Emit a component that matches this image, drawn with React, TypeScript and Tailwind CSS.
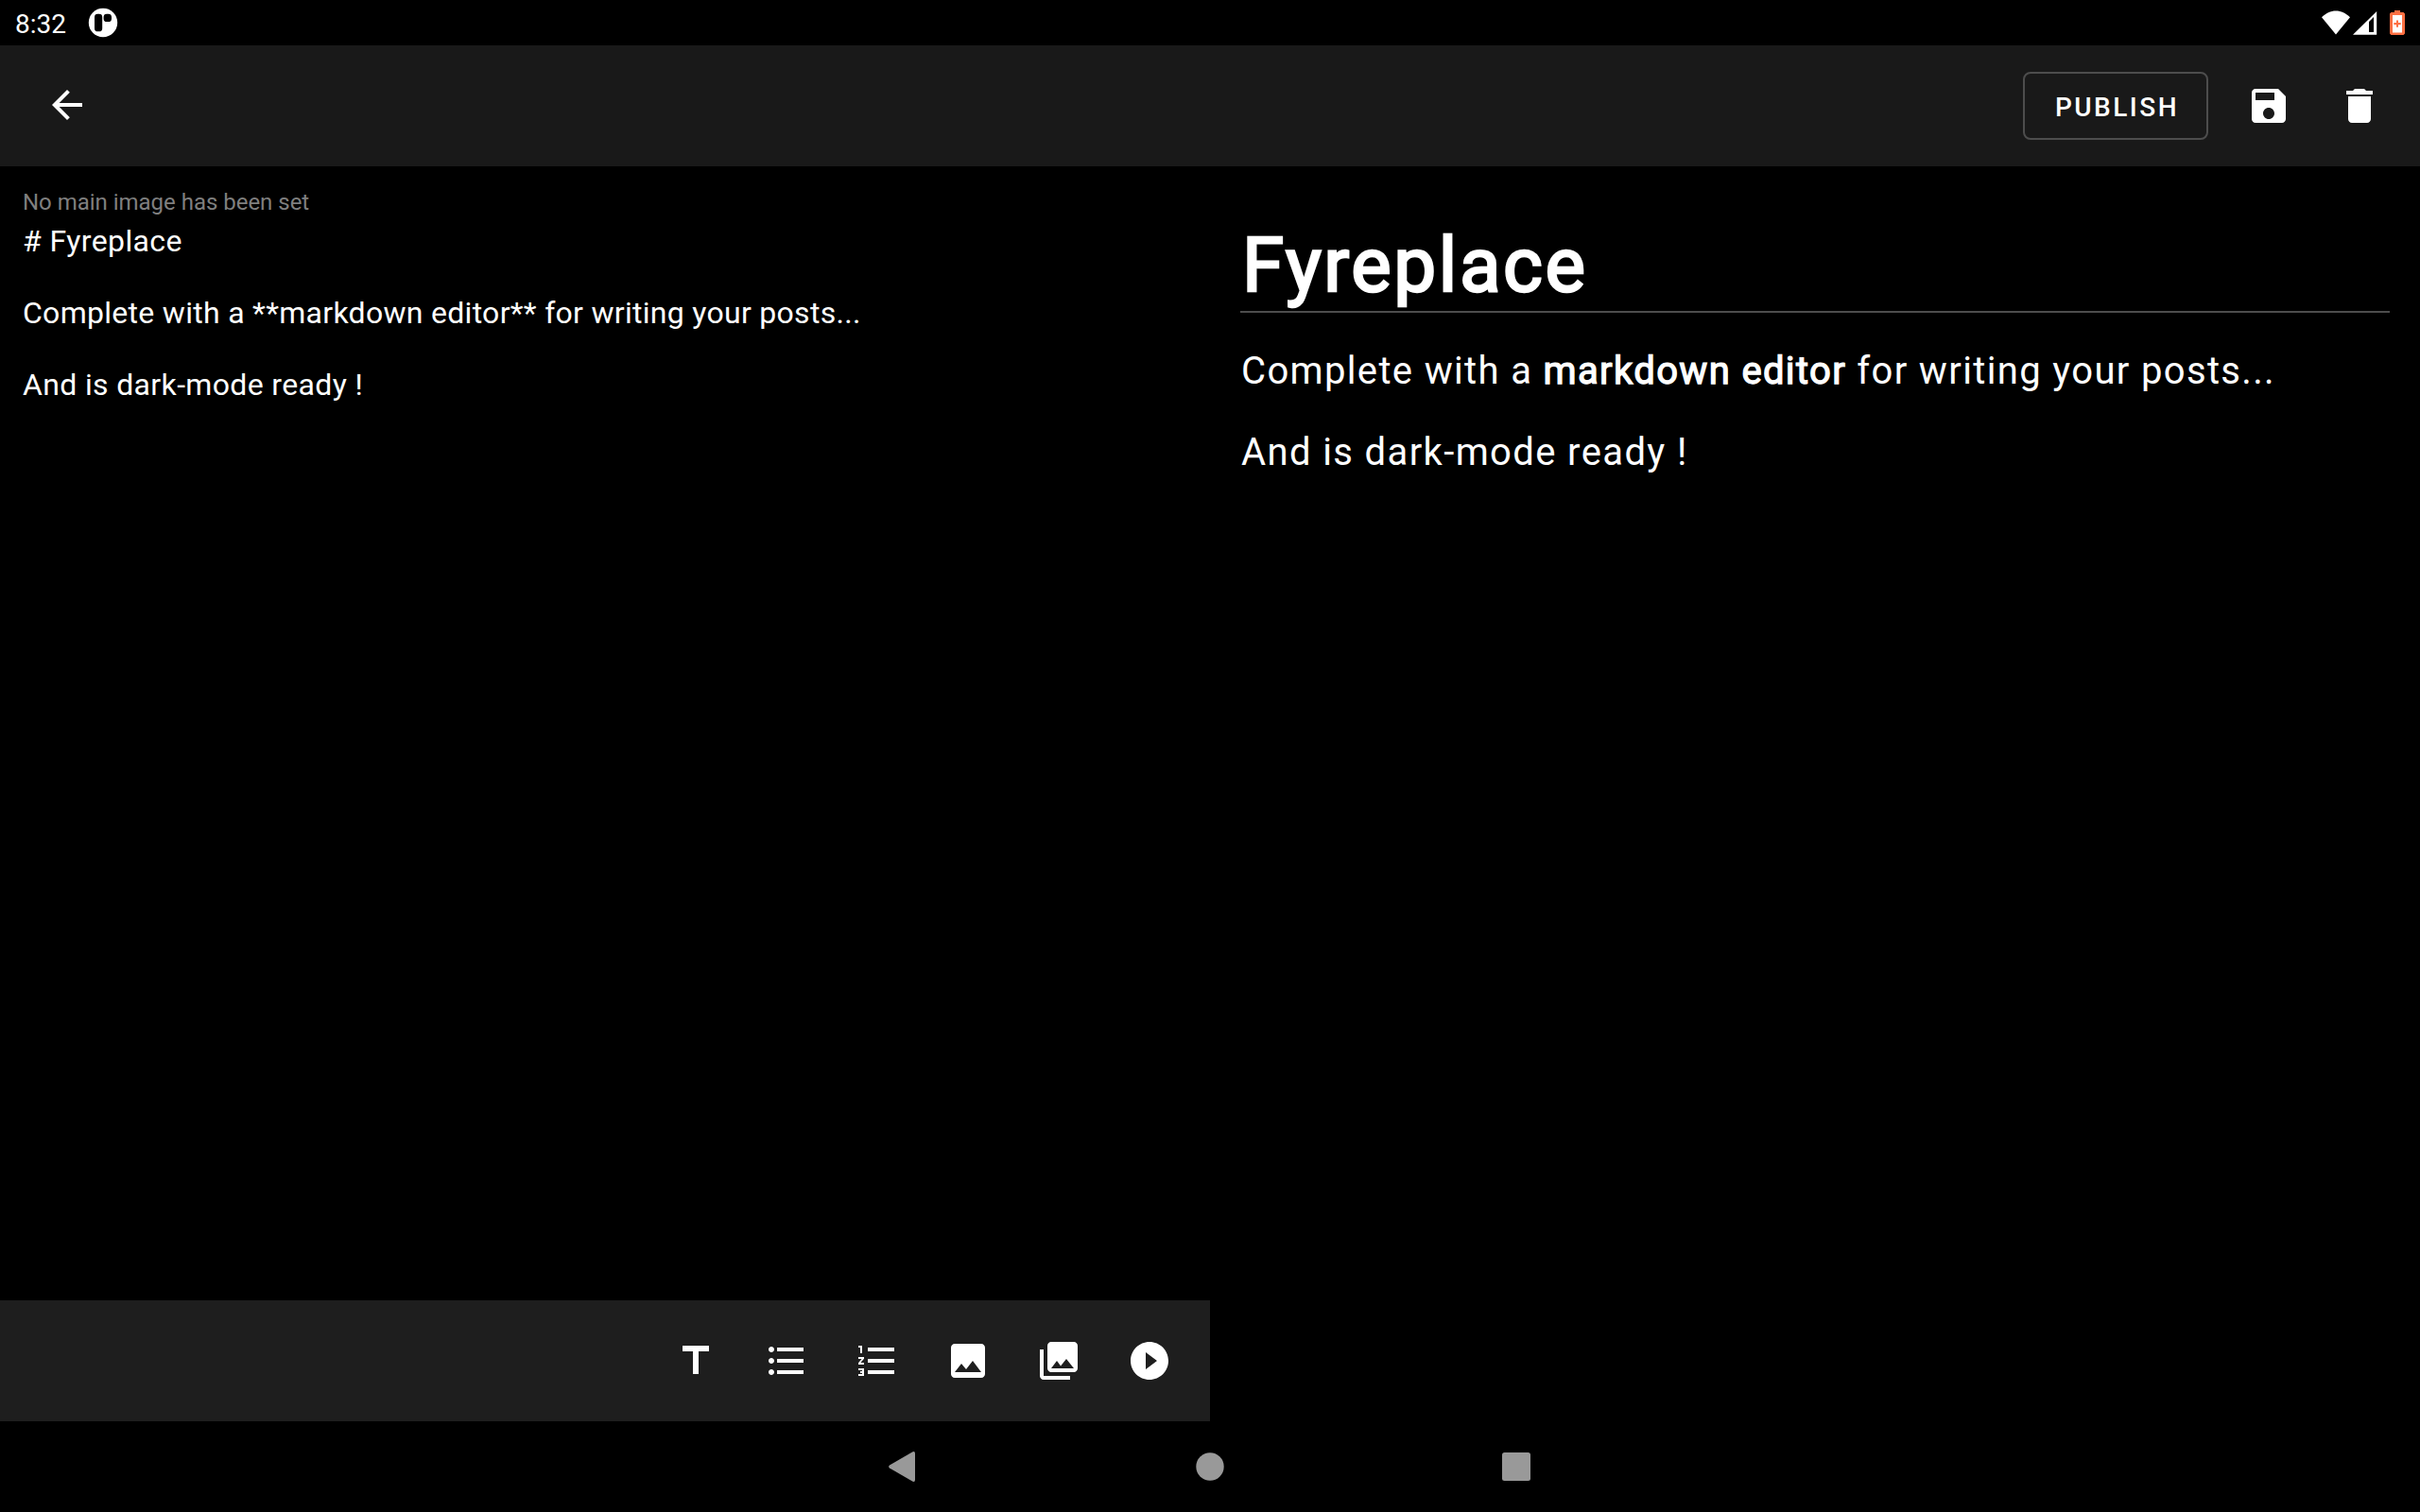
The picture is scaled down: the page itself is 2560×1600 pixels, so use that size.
import type { ReactNode } from "react";

function Icon({ d, className = "" }: { d: string; className?: string }) {
  return (
    <svg viewBox="0 0 24 24" className={`size-12 shrink-0 fill-white ${className}`}>
      <path d={d} />
    </svg>
  );
}

const icons = {
  back: "M20,11H7.83l5.59,-5.59L12,4l-8,8 8,8 1.41,-1.41L7.83,13H20v-2z",
  save: "M17,3H5c-1.11,0 -2,0.9 -2,2v14c0,1.1 0.89,2 2,2h14c1.1,0 2,-0.9 2,-2V7l-4,-4zM12,19c-1.66,0 -3,-1.34 -3,-3s1.34,-3 3,-3 3,1.34 3,3 -1.34,3 -3,3zM15,9H5V5h10v4z",
  remove: "M6,19c0,1.1 0.9,2 2,2h8c1.1,0 2,-0.9 2,-2V7H6v12zM19,4h-3.5l-1,-1h-5l-1,1H5v2h14V4z",
};

const tools = [
  { name: "Title", d: "M5,4v3h5.5v12h3V7H19V4z" },
  {
    name: "Bulleted list",
    d: "M4,10.5c-0.83,0 -1.5,0.67 -1.5,1.5s0.67,1.5 1.5,1.5 1.5,-0.67 1.5,-1.5 -0.67,-1.5 -1.5,-1.5zM4,4.5c-0.83,0 -1.5,0.67 -1.5,1.5S3.17,7.5 4,7.5 5.5,6.83 5.5,6 4.83,4.5 4,4.5zM4,16.5c-0.83,0 -1.5,0.68 -1.5,1.5s0.68,1.5 1.5,1.5 1.5,-0.68 1.5,-1.5 -0.67,-1.5 -1.5,-1.5zM7,19h14v-2H7v2zM7,13h14v-2H7v2zM7,5v2h14V5H7z",
  },
  {
    name: "Numbered list",
    d: "M2,17h2v0.5H3v1h1v0.5H2v1h3v-4H2v1zM3,8h1V4H2v1h1v3zM2,11h1.8L2,13.1v0.9h3v-1H3.2L5,10.9V10H2v1zM7,5v2h14V5H7zM7,19h14v-2H7v2zM7,13h14v-2H7v2z",
  },
  {
    name: "Image",
    d: "M21,19V5c0,-1.1 -0.9,-2 -2,-2H5c-1.1,0 -2,0.9 -2,2v14c0,1.1 0.9,2 2,2h14c1.1,0 2,-0.9 2,-2zM8.5,13.5l2.5,3.01L14.5,12l4.5,6H5l3.5,-4.5z",
  },
  {
    name: "Gallery",
    d: "M22,16V4c0,-1.1 -0.9,-2 -2,-2H8c-1.1,0 -2,0.9 -2,2v12c0,1.1 0.9,2 2,2h12c1.1,0 2,-0.9 2,-2zM11,12l2.03,2.71L16,11l4,5H8l3,-4zM2,6v14c0,1.1 0.9,2 2,2h14v-2H4V6H2z",
  },
  {
    name: "Video",
    d: "M12,2C6.48,2 2,6.48 2,12s4.48,10 10,10 10,-4.48 10,-10S17.52,2 12,2zM10,16.5v-9l6,4.5 -6,4.5z",
  },
];

function IconButton({ label, d, className = "" }: { label: string; d: string; className?: string }) {
  return (
    <button aria-label={label} className={`grid size-24 place-items-center ${className}`}>
      <Icon d={d} />
    </button>
  );
}

function StatusBar() {
  return (
    <header className="flex h-12 shrink-0 items-center px-4">
      <span className="pt-[3px] text-[28px] leading-8">8:32</span>
      <svg viewBox="0 0 32 32" className="ml-[23px] size-8">
        <circle cx="16" cy="16" r="15.2" fill="white" />
        <rect x="7" y="6.7" width="8.2" height="18.6" rx="3.4" fill="black" />
        <rect x="16.6" y="6.7" width="8.4" height="8.4" rx="3.4" fill="black" />
      </svg>
      <div className="grow" />
      <svg viewBox="0 0 30 26" className="h-[26px] w-[30px]" fill="white">
        <path d="M15 25.4 0 7.2C4.3 3 9.5 .4 15 .4S25.7 3 30 7.2Z" />
      </svg>
      <svg viewBox="0 0 26 26" className="ml-[3px] h-[26px] w-[26px]" fill="white">
        <path fillRule="evenodd" d="M0 25.7 25.2 1V25.7ZM17 12V23h5V7Z" />
      </svg>
      <svg viewBox="0 0 16 26" className="ml-[13px] h-[26px] w-4">
        <path fill="#ff7043" d="M5 0h6v2h3.5L16 3.500v21L14.500 26h-13L0 24.500v-21L1.500 2H5Z" />
        <path fill="white" d="M3 5h10v18.500H3Z" />
        <path fill="#ff7043" d="M7 10.500h2v2.500h2.700v2.200H9v2.600H7v-2.600H4.300v-2.200H7Z" />
      </svg>
    </header>
  );
}

function Toolbar() {
  return (
    <div className="flex h-32 shrink-0 items-center bg-[#191919] pr-4 pl-[23px]">
      <IconButton label="Back" d={icons.back} className="-mt-0.5" />
      <div className="grow" />
      <button className="h-[72px] w-[196px] rounded-lg border-2 border-[#4d4d4d] pt-[3px] pl-[3px] text-[28px] leading-8 font-medium tracking-[2.5px]">
        PUBLISH
      </button>
      <IconButton label="Save" d={icons.save} className="ml-4" />
      <IconButton label="Delete" d={icons.remove} />
    </div>
  );
}

function Strong({ children }: { children: ReactNode }) {
  return <strong className="font-normal [-webkit-text-stroke:1.25px_white]">{children}</strong>;
}

function Editor() {
  return (
    <section className="flex w-1/2 flex-col">
      <div className="grow px-6 pt-6">
        <p className="text-2xl leading-7 tracking-[-0.02px] text-[#7f7f7f]">No main image has been set</p>
        <div className="mt-2 text-[32px] leading-[38px] tracking-[0.29px] whitespace-pre">
          <span className="tracking-[0.4px]"># Fyreplace</span>
          {"\n\nComplete with a **markdown editor** for writing your posts...\n\n"}
          <span className="tracking-[0.35px]">And is dark-mode ready !</span>
        </div>
      </div>
      <div className="flex h-32 items-center justify-end bg-[#1e1e1e] pr-4">
        {tools.map((t) => (
          <IconButton key={t.name} label={t.name} d={t.d} />
        ))}
      </div>
    </section>
  );
}

function Preview() {
  return (
    <section className="w-1/2 px-8 pt-[58px] text-[40px] leading-[47px]">
      <h1 className="h-[97px] border-b-2 border-[#4d4d4d] pl-0.5 text-[80px] leading-[94px] tracking-[2.6px] [-webkit-text-stroke:2.5px_white]">
        Fyreplace
      </h1>
      <p className="mt-[38px] pl-px tracking-[1.345px]">
        Complete with a <Strong>markdown editor</Strong> for writing your posts...
      </p>
      <p className="mt-[39px] pl-px tracking-[1.375px]">And is dark-mode ready !</p>
    </section>
  );
}

function NavigationBar() {
  return (
    <nav className="flex h-24 shrink-0 items-center justify-center gap-[292px]">
      <svg viewBox="0 0 32 32" className="size-8 fill-[#999]">
        <path d="M25.600 .2 1 14.600Q-.7 16 1 17.400L25.600 31.800Q28 32.400 28 30V2Q28 -.4 25.600 .2Z" />
      </svg>
      <svg viewBox="0 0 32 32" className="size-8 fill-[#999]">
        <circle cx="16" cy="16" r="14.700" />
      </svg>
      <svg viewBox="0 0 32 32" className="size-8 fill-[#999]">
        <rect x="1" y="1" width="30" height="30" rx="2.500" />
      </svg>
    </nav>
  );
}

export default function App() {
  return (
    <div className="flex h-[1600px] w-[2560px] flex-col overflow-hidden bg-black font-['Roboto',sans-serif] text-white">
      <StatusBar />
      <Toolbar />
      <main className="flex min-h-0 grow">
        <Editor />
        <Preview />
      </main>
      <NavigationBar />
    </div>
  );
}
